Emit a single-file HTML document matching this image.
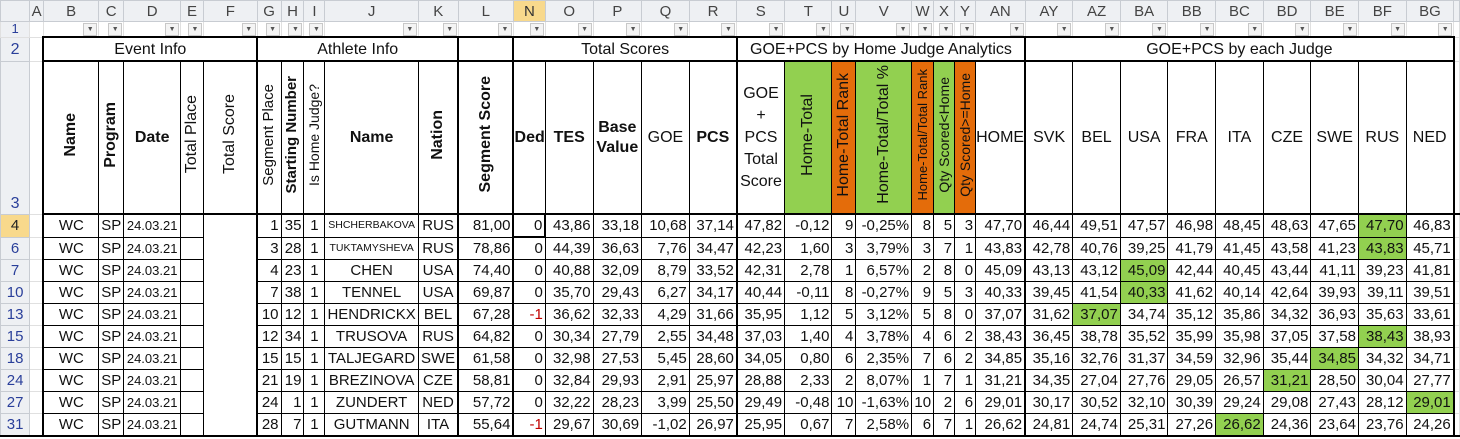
<!DOCTYPE html>
<html><head><meta charset="utf-8">
<style>
html,body{margin:0;padding:0;background:#fff;width:1460px;height:439px;overflow:hidden}
table{border-collapse:collapse;table-layout:fixed;font-family:"Liberation Sans",sans-serif;font-size:15px;color:#111}
td{padding:0 2px;white-space:nowrap;overflow:hidden;border:1px solid #000;text-align:right;line-height:17px}
.ch td{height:20px;background:#eef0f3;border:1px solid #c8ccd2;color:#444;text-align:center;font-size:15px;padding:0}
.ch td.sel{background:#f8d98c;color:#333}
td.rh{background:#eef0f3;border:1px solid #c8ccd2;color:#2a3f9a;text-align:center;padding:0;font-size:15px}
td.rh.sel{background:#f8d98c;color:#222}
td.ga{border:1px solid #e0e0e0;border-top-color:#e0e0e0}
.r1 td{height:14px;border:1px solid #e0e0e0;position:relative;padding:0}
.dd{position:absolute;right:1px;top:1px;width:12px;height:11px;border:1px solid #c8c8c8;background:#f4f4f4;font-size:7px;line-height:11px;text-align:center;color:#555}
.r2 td{height:22px;text-align:center;font-size:16px;border-top:2px solid #000;border-bottom:2px solid #000}
.tk{border-left:2px solid #000 !important}
.tkr{border-right:2px solid #000 !important}
.r3 td{height:151px;text-align:center;vertical-align:middle;border-bottom:2px solid #000;padding:0;font-size:16px;line-height:20px}
.v{display:inline-block;writing-mode:vertical-rl;transform:rotate(180deg);white-space:nowrap}
b{font-weight:bold}
.g{background:#92d050}.o{background:#e46c0a}
.d td{height:21px}
.c{text-align:center}
.sm{font-size:13px}
.xs{font-size:10.5px}
.red{color:#c00000}
</style></head><body>
<table>
<colgroup>
<col style="width:30px"><col style="width:14px"><col style="width:57px"><col style="width:23px"><col style="width:57px"><col style="width:23px"><col style="width:56px"><col style="width:24px"><col style="width:23px"><col style="width:20px"><col style="width:89px"><col style="width:40px"><col style="width:56px"><col style="width:32px"><col style="width:48px"><col style="width:49px"><col style="width:48px"><col style="width:48px"><col style="width:48px"><col style="width:48px"><col style="width:24px"><col style="width:56px"><col style="width:22px"><col style="width:21px"><col style="width:19px"><col style="width:49px"><col style="width:48px"><col style="width:48px"><col style="width:48px"><col style="width:48px"><col style="width:48px"><col style="width:48px"><col style="width:48px"><col style="width:48px"><col style="width:48px"><col style="width:4px">
</colgroup>
<tr class="ch"><td></td><td>A</td><td>B</td><td>C</td><td>D</td><td>E</td><td>F</td><td>G</td><td>H</td><td>I</td><td>J</td><td>K</td><td>L</td><td class="sel">N</td><td>O</td><td>P</td><td>Q</td><td>R</td><td>S</td><td>T</td><td>U</td><td>V</td><td>W</td><td>X</td><td>Y</td><td>AN</td><td>AY</td><td>AZ</td><td>BA</td><td>BB</td><td>BC</td><td>BD</td><td>BE</td><td>BF</td><td>BG</td><td></td></tr>
<tr class="r1"><td class="rh" style="font-size:13px;line-height:12px">1</td><td></td>
<td><span class="dd">▼</span></td><td><span class="dd">▼</span></td><td><span class="dd">▼</span></td><td><span class="dd">▼</span></td><td><span class="dd">▼</span></td><td><span class="dd">▼</span></td><td><span class="dd">▼</span></td><td><span class="dd">▼</span></td><td><span class="dd">▼</span></td><td><span class="dd">▼</span></td><td><span class="dd">▼</span></td><td><span class="dd">▼</span></td><td><span class="dd">▼</span></td><td><span class="dd">▼</span></td><td><span class="dd">▼</span></td><td><span class="dd">▼</span></td><td><span class="dd">▼</span></td><td><span class="dd">▼</span></td><td><span class="dd">▼</span></td><td><span class="dd">▼</span></td><td><span class="dd">▼</span></td><td><span class="dd">▼</span></td><td><span class="dd">▼</span></td><td><span class="dd">▼</span></td><td><span class="dd">▼</span></td><td><span class="dd">▼</span></td><td><span class="dd">▼</span></td><td><span class="dd">▼</span></td><td><span class="dd">▼</span></td><td><span class="dd">▼</span></td><td><span class="dd">▼</span></td><td><span class="dd">▼</span></td><td><span class="dd">▼</span></td><td></td></tr>
<tr class="r2"><td class="rh" style="border-top:1px solid #c8ccd2;border-bottom:1px solid #c8ccd2">2</td><td class="ga" style="border-top:1px solid #e0e0e0;border-bottom:1px solid #e0e0e0"></td>
<td colspan="5" class="tk tkr">Event Info</td><td colspan="5" class="tk tkr">Athlete Info</td><td class="tk tkr"></td><td colspan="5" class="tk tkr">Total Scores</td><td colspan="8" class="tk tkr">GOE+PCS by Home Judge Analytics</td><td colspan="9" class="tk tkr">GOE+PCS by each Judge</td><td class="ga" style="border-top:1px solid #e0e0e0;border-bottom:1px solid #e0e0e0"></td></tr>
<tr class="r3"><td class="rh" style="vertical-align:bottom;border-bottom:1px solid #c8ccd2">3</td><td class="ga" style="border-bottom:1px solid #e0e0e0"></td>
<td class="tk"><span class="v"><b>Name</b></span></td>
<td><span class="v"><b>Program</b></span></td>
<td><b>Date</b></td>
<td><span class="v">Total Place</span></td>
<td class="tkr"><span class="v">Total Score</span></td>
<td class="tk"><span class="v" style="font-size:15px">Segment Place</span></td>
<td><span class="v" style="font-size:15px"><b>Starting Number</b></span></td>
<td><span class="v" style="font-size:14px">Is Home Judge?</span></td>
<td><b>Name</b></td>
<td class="tkr"><span class="v"><b>Nation</b></span></td>
<td class="tk tkr"><span class="v"><b>Segment Score</b></span></td>
<td class="tk"><b>Ded</b></td>
<td><b>TES</b></td>
<td><b>Base<br>Value</b></td>
<td>GOE</td>
<td class="tkr"><b>PCS</b></td>
<td class="tk" style="line-height:22px">GOE<br>+<br>PCS<br>Total<br>Score</td>
<td class="g"><span class="v">Home-Total</span></td>
<td class="o"><span class="v">Home-Total Rank</span></td>
<td class="g"><span class="v">Home-Total/Total %</span></td>
<td class="o"><span class="v" style="font-size:13px">Home-Total/Total Rank</span></td>
<td class="g"><span class="v" style="font-size:14px">Qty Scored&lt;Home</span></td>
<td class="o"><span class="v" style="font-size:14px">Qty Scored&gt;=Home</span></td>
<td class="tkr">HOME</td>
<td class="tk">SVK</td><td>BEL</td><td>USA</td><td>FRA</td><td>ITA</td><td>CZE</td><td>SWE</td><td>RUS</td><td class="tkr">NED</td><td class="ga"></td></tr>

<tr class="d"><td class="rh sel">4</td><td class="ga"></td><td class="c tk">WC</td><td class="c">SP</td><td class="c sm">24.03.21</td><td></td><td rowspan="10" class="tkr" style="border-bottom:2px solid #000"></td><td class="tk">1</td><td>35</td><td class="c">1</td><td class="c xs">SHCHERBAKOVA</td><td class="c tkr">RUS</td><td class="tkr">81,00</td><td style="border:2px solid #000">0</td><td>43,86</td><td>33,18</td><td>10,68</td><td class="tkr">37,14</td><td class="tk">47,82</td><td>-0,12</td><td>9</td><td>-0,25%</td><td>8</td><td>5</td><td>3</td><td class="tkr">47,70</td><td class="tk">46,44</td><td>49,51</td><td>47,57</td><td>46,98</td><td>48,45</td><td>48,63</td><td>47,65</td><td class="g">47,70</td><td class="tkr">46,83</td><td class="ga"></td></tr>
<tr class="d"><td class="rh">6</td><td class="ga"></td><td class="c tk">WC</td><td class="c">SP</td><td class="c sm">24.03.21</td><td></td><td class="tk">3</td><td>28</td><td class="c">1</td><td class="c xs">TUKTAMYSHEVA</td><td class="c tkr">RUS</td><td class="tkr">78,86</td><td>0</td><td>44,39</td><td>36,63</td><td>7,76</td><td class="tkr">34,47</td><td class="tk">42,23</td><td>1,60</td><td>3</td><td>3,79%</td><td>3</td><td>7</td><td>1</td><td class="tkr">43,83</td><td class="tk">42,78</td><td>40,76</td><td>39,25</td><td>41,79</td><td>41,45</td><td>43,58</td><td>41,23</td><td class="g">43,83</td><td class="tkr">45,71</td><td class="ga"></td></tr>
<tr class="d"><td class="rh">7</td><td class="ga"></td><td class="c tk">WC</td><td class="c">SP</td><td class="c sm">24.03.21</td><td></td><td class="tk">4</td><td>23</td><td class="c">1</td><td class="c">CHEN</td><td class="c tkr">USA</td><td class="tkr">74,40</td><td>0</td><td>40,88</td><td>32,09</td><td>8,79</td><td class="tkr">33,52</td><td class="tk">42,31</td><td>2,78</td><td>1</td><td>6,57%</td><td>2</td><td>8</td><td>0</td><td class="tkr">45,09</td><td class="tk">43,13</td><td>43,12</td><td class="g">45,09</td><td>42,44</td><td>40,45</td><td>43,44</td><td>41,11</td><td>39,23</td><td class="tkr">41,81</td><td class="ga"></td></tr>
<tr class="d"><td class="rh">10</td><td class="ga"></td><td class="c tk">WC</td><td class="c">SP</td><td class="c sm">24.03.21</td><td></td><td class="tk">7</td><td>38</td><td class="c">1</td><td class="c">TENNEL</td><td class="c tkr">USA</td><td class="tkr">69,87</td><td>0</td><td>35,70</td><td>29,43</td><td>6,27</td><td class="tkr">34,17</td><td class="tk">40,44</td><td>-0,11</td><td>8</td><td>-0,27%</td><td>9</td><td>5</td><td>3</td><td class="tkr">40,33</td><td class="tk">39,45</td><td>41,54</td><td class="g">40,33</td><td>41,62</td><td>40,14</td><td>42,64</td><td>39,93</td><td>39,11</td><td class="tkr">39,51</td><td class="ga"></td></tr>
<tr class="d"><td class="rh">13</td><td class="ga"></td><td class="c tk">WC</td><td class="c">SP</td><td class="c sm">24.03.21</td><td></td><td class="tk">10</td><td>12</td><td class="c">1</td><td class="c">HENDRICKX</td><td class="c tkr">BEL</td><td class="tkr">67,28</td><td class="red">-1</td><td>36,62</td><td>32,33</td><td>4,29</td><td class="tkr">31,66</td><td class="tk">35,95</td><td>1,12</td><td>5</td><td>3,12%</td><td>5</td><td>8</td><td>0</td><td class="tkr">37,07</td><td class="tk">31,62</td><td class="g">37,07</td><td>34,74</td><td>35,12</td><td>35,86</td><td>34,32</td><td>36,93</td><td>35,63</td><td class="tkr">33,61</td><td class="ga"></td></tr>
<tr class="d"><td class="rh">15</td><td class="ga"></td><td class="c tk">WC</td><td class="c">SP</td><td class="c sm">24.03.21</td><td></td><td class="tk">12</td><td>34</td><td class="c">1</td><td class="c">TRUSOVA</td><td class="c tkr">RUS</td><td class="tkr">64,82</td><td>0</td><td>30,34</td><td>27,79</td><td>2,55</td><td class="tkr">34,48</td><td class="tk">37,03</td><td>1,40</td><td>4</td><td>3,78%</td><td>4</td><td>6</td><td>2</td><td class="tkr">38,43</td><td class="tk">36,45</td><td>38,78</td><td>35,52</td><td>35,99</td><td>35,98</td><td>37,05</td><td>37,58</td><td class="g">38,43</td><td class="tkr">38,93</td><td class="ga"></td></tr>
<tr class="d"><td class="rh">18</td><td class="ga"></td><td class="c tk">WC</td><td class="c">SP</td><td class="c sm">24.03.21</td><td></td><td class="tk">15</td><td>15</td><td class="c">1</td><td class="c">TALJEGARD</td><td class="c tkr">SWE</td><td class="tkr">61,58</td><td>0</td><td>32,98</td><td>27,53</td><td>5,45</td><td class="tkr">28,60</td><td class="tk">34,05</td><td>0,80</td><td>6</td><td>2,35%</td><td>7</td><td>6</td><td>2</td><td class="tkr">34,85</td><td class="tk">35,16</td><td>32,76</td><td>31,37</td><td>34,59</td><td>32,96</td><td>35,44</td><td class="g">34,85</td><td>34,32</td><td class="tkr">34,71</td><td class="ga"></td></tr>
<tr class="d"><td class="rh">24</td><td class="ga"></td><td class="c tk">WC</td><td class="c">SP</td><td class="c sm">24.03.21</td><td></td><td class="tk">21</td><td>19</td><td class="c">1</td><td class="c">BREZINOVA</td><td class="c tkr">CZE</td><td class="tkr">58,81</td><td>0</td><td>32,84</td><td>29,93</td><td>2,91</td><td class="tkr">25,97</td><td class="tk">28,88</td><td>2,33</td><td>2</td><td>8,07%</td><td>1</td><td>7</td><td>1</td><td class="tkr">31,21</td><td class="tk">34,35</td><td>27,04</td><td>27,76</td><td>29,05</td><td>26,57</td><td class="g">31,21</td><td>28,50</td><td>30,04</td><td class="tkr">27,77</td><td class="ga"></td></tr>
<tr class="d"><td class="rh">27</td><td class="ga"></td><td class="c tk">WC</td><td class="c">SP</td><td class="c sm">24.03.21</td><td></td><td class="tk">24</td><td>1</td><td class="c">1</td><td class="c">ZUNDERT</td><td class="c tkr">NED</td><td class="tkr">57,72</td><td>0</td><td>32,22</td><td>28,23</td><td>3,99</td><td class="tkr">25,50</td><td class="tk">29,49</td><td>-0,48</td><td>10</td><td>-1,63%</td><td>10</td><td>2</td><td>6</td><td class="tkr">29,01</td><td class="tk">30,17</td><td>30,52</td><td>32,10</td><td>30,39</td><td>29,24</td><td>29,08</td><td>27,43</td><td>28,12</td><td class="g tkr">29,01</td><td class="ga"></td></tr>
<tr class="d" style="border-bottom:2px solid #000"><td class="rh">31</td><td class="ga"></td><td class="c tk">WC</td><td class="c">SP</td><td class="c sm">24.03.21</td><td></td><td class="tk">28</td><td>7</td><td class="c">1</td><td class="c">GUTMANN</td><td class="c tkr">ITA</td><td class="tkr">55,64</td><td class="red">-1</td><td>29,67</td><td>30,69</td><td>-1,02</td><td class="tkr">26,97</td><td class="tk">25,95</td><td>0,67</td><td>7</td><td>2,58%</td><td>6</td><td>7</td><td>1</td><td class="tkr">26,62</td><td class="tk">24,81</td><td>24,74</td><td>25,31</td><td>27,26</td><td class="g">26,62</td><td>24,36</td><td>23,64</td><td>23,76</td><td class="tkr">24,26</td><td class="ga"></td></tr>
</table>
</body></html>
